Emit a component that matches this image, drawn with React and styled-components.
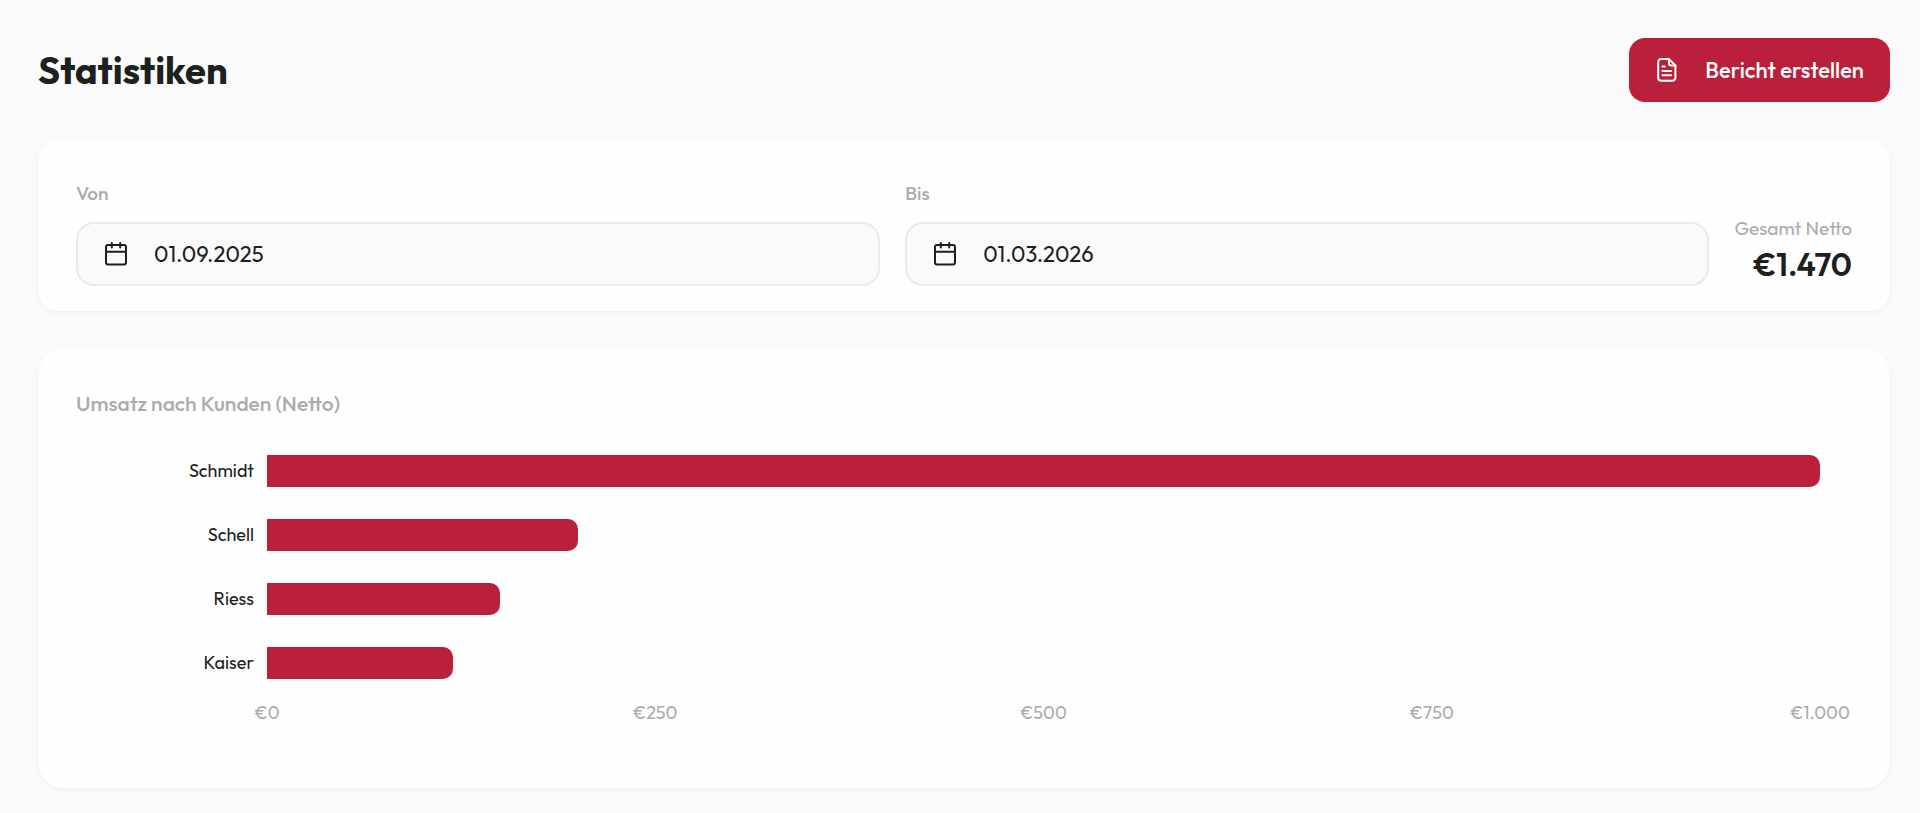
import React, { useState } from "react";
import styled, { createGlobalStyle } from "styled-components";

const customers = [
  { name: "Schmidt", amount: 1000 },
  { name: "Schell", amount: 200 },
  { name: "Riess", amount: 150 },
  { name: "Kaiser", amount: 120 },
];

const ticks = [0, 250, 500, 750, 1000];
const maxAmount = 1000;

const formatEuro = (value) => "€" + value.toLocaleString("de-DE");

function FileIcon() {
  return (
    <Icon viewBox="0 0 24 24" aria-hidden="true">
      <path d="M13.8 1H6.2a3 3 0 0 0-3 3v15.7a3 3 0 0 0 3 3h11.2a3 3 0 0 0 3-3V7.4z" />
      <path d="M14 1.2v4.2a2 2 0 0 0 2 2h4.2" />
      <path d="M7.4 8.4h2.4M7.4 13h8.8M7.4 17.2h8.8" />
    </Icon>
  );
}

function CalendarIcon() {
  return (
    <Icon viewBox="0 0 24 24" aria-hidden="true">
      <rect x="2" y="3" width="20" height="19.6" rx="2" />
      <path d="M2 9.7h20M7.8 1v4.6M16.2 1v4.6" />
    </Icon>
  );
}

function DateField({ id, label, value, onChange }) {
  return (
    <Field>
      <Label htmlFor={id}>{label}</Label>
      <InputBox>
        <CalendarIcon />
        <Input
          id={id}
          type="text"
          value={value}
          onChange={(e) => onChange(e.target.value)}
        />
      </InputBox>
    </Field>
  );
}

function App() {
  const [from, setFrom] = useState("01.09.2025");
  const [to, setTo] = useState("01.03.2026");

  const total = customers.reduce((sum, customer) => sum + customer.amount, 0);

  return (
    <>
      <GlobalStyle />
      <Page>
        <Header>
          <Title>Statistiken</Title>
          <Button type="button">
            <FileIcon />
            Bericht erstellen
          </Button>
        </Header>
        <FilterCard>
          <DateField id="from" label="Von" value={from} onChange={setFrom} />
          <DateField id="to" label="Bis" value={to} onChange={setTo} />
          <Total>
            <TotalLabel>Gesamt Netto</TotalLabel>
            <TotalValue>{formatEuro(total)}</TotalValue>
          </Total>
        </FilterCard>
        <ChartCard>
          <ChartTitle>Umsatz nach Kunden (Netto)</ChartTitle>
          <Rows>
            {customers.map((customer) => (
              <Row key={customer.name}>
                <Name>{customer.name}</Name>
                <Track>
                  <Bar
                    style={{ width: `${(customer.amount / maxAmount) * 100}%` }}
                  />
                </Track>
              </Row>
            ))}
          </Rows>
          <Axis>
            {ticks.map((tick) => (
              <Tick key={tick}>{formatEuro(tick)}</Tick>
            ))}
          </Axis>
        </ChartCard>
      </Page>
    </>
  );
}

export default App;

const GlobalStyle = createGlobalStyle`
  * {
    box-sizing: border-box;
  }

  body {
    margin: 0;
    background: #fafafa;
    color: #1c2120;
    font-family: Outfit, Lato, "Liberation Sans", sans-serif;
  }
`;

const Page = styled.main`
  display: flex;
  flex-direction: column;
  gap: 38px;
  padding: 38px 30px 24px 38px;
`;

const Header = styled.header`
  display: flex;
  align-items: center;
  justify-content: space-between;
`;

const Title = styled.h1`
  margin: 0;
  font-weight: 700;
  font-size: 38px;
  line-height: 48px;
`;

const Icon = styled.svg`
  width: 24px;
  height: 24px;
  flex-shrink: 0;

  fill: none;
  stroke: currentColor;
  stroke-width: 2;
  stroke-linecap: round;
  stroke-linejoin: round;
`;

const Button = styled.button`
  display: flex;
  align-items: center;
  gap: 26px;
  height: 64px;
  padding: 0 26px;

  background: #ba203a;
  border: none;
  border-radius: 16px;
  color: #ffffff;
  font-family: inherit;
  font-weight: 500;
  font-size: 22px;
  line-height: 28px;
  cursor: pointer;
`;

const Card = styled.section`
  background: #fefefe;
  box-shadow: 0 2px 4px rgba(0, 0, 0, 0.04);
`;

const FilterCard = styled(Card)`
  display: flex;
  align-items: flex-end;
  gap: 25px;
  padding: 38px 38px 25px;
  border-radius: 20px;
`;

const Field = styled.div`
  flex: 1;
  min-width: 0;
`;

const Label = styled.label`
  display: block;
  margin-bottom: 15px;
  padding-top: 1px;

  color: #a9acab;
  font-weight: 500;
  font-size: 19px;
  line-height: 28px;
`;

const InputBox = styled.div`
  display: flex;
  align-items: center;
  gap: 26px;
  height: 64px;
  padding: 0 26px;

  background: #fafafa;
  border: 2px solid #eaeaea;
  border-radius: 18px;
`;

const Input = styled.input`
  flex: 1;
  min-width: 0;
  padding: 0;

  background: transparent;
  border: none;
  outline: none;
  color: inherit;
  font-family: inherit;
  font-size: 22px;
  line-height: 28px;
`;

const Total = styled.div`
  text-align: right;
`;

const TotalLabel = styled.div`
  color: #a9acab;
  font-size: 19px;
  line-height: 28px;
`;

const TotalValue = styled.div`
  font-weight: 600;
  font-size: 32px;
  line-height: 44px;
`;

const ChartCard = styled(Card)`
  padding: 38px 38px 65px;
  border-radius: 26px;
`;

const ChartTitle = styled.h2`
  margin: 0 0 20px;

  color: #a9acab;
  font-weight: 500;
  font-size: 21px;
  line-height: 32px;
`;

const Rows = styled.div`
  padding-right: 32px;
`;

const Row = styled.div`
  display: flex;
  align-items: center;
  gap: 13px;
  height: 64px;
`;

const Name = styled.span`
  width: 178px;
  flex-shrink: 0;

  font-size: 18px;
  line-height: 20px;
  text-align: right;
`;

const Track = styled.div`
  flex: 1;
`;

const Bar = styled.div`
  height: 32px;
  background: #ba203a;
  border-radius: 0 10px 10px 0;
`;

const Axis = styled.div`
  display: flex;
  justify-content: space-between;
  margin: 0 32px 0 191px;
  padding-top: 8px;
`;

const Tick = styled.span`
  display: flex;
  justify-content: center;
  width: 0;

  color: #a9acab;
  font-size: 18px;
  line-height: 20px;
  white-space: nowrap;
`;
